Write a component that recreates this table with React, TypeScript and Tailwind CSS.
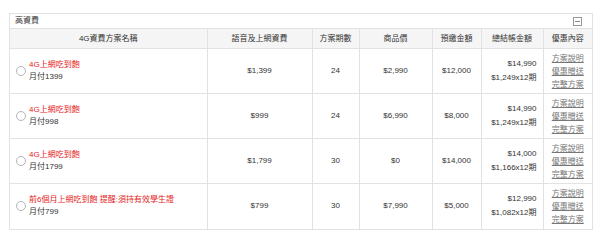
import React from 'react';

const plans = [
  { name: '4G上網吃到飽', monthly: '月付1399', fee: '$1,399', period: '24', price: '$2,990', prepay: '$12,000', total: '$14,990', install: '$1,249x12期' },
  { name: '4G上網吃到飽', monthly: '月付998', fee: '$999', period: '24', price: '$6,990', prepay: '$8,000', total: '$14,990', install: '$1,249x12期' },
  { name: '4G上網吃到飽', monthly: '月付1799', fee: '$1,799', period: '30', price: '$0', prepay: '$14,000', total: '$14,000', install: '$1,166x12期' },
  { name: '前6個月上網吃到飽 提醒:須持有效學生證', monthly: '月付799', fee: '$799', period: '30', price: '$7,990', prepay: '$5,000', total: '$12,990', install: '$1,082x12期' },
];

const headers = ['4G資費方案名稱', '語音及上網資費', '方案期數', '商品價', '預繳金額', '總結帳金額', '優惠內容'];
const widths = ['w-[197px]', 'w-[105px]', 'w-[47px]', 'w-[73px]', 'w-[49px]', 'w-[62px]', 'w-[49px]'];

export default function App() {
  return (
    <div className="w-[600px] h-[245px] bg-white pt-[13px] pl-[9px] text-[8px] leading-[12px] text-[#333] font-['Liberation_Sans','Noto_Sans_CJK_TC',sans-serif]">
      <div className="w-[584px] border border-[#e2e2e2]">
        {/* title band */}
        <div className="h-[14px] flex items-center justify-between pl-[5px] pr-[10px]">
          <span>高資費</span>
          <span className="w-[9px] h-[9px] border border-[#999] flex items-center justify-center">
            <span className="w-[5px] h-px bg-[#888]" />
          </span>
        </div>

        <table className="w-full table-fixed border-collapse">
          <colgroup>
            {widths.map((w, i) => (
              <col key={i} className={w} />
            ))}
          </colgroup>
          <thead>
            <tr className="h-[20px] bg-[#f5f5f5]">
              {headers.map((h, i) => (
                <th key={i} className={`font-normal text-center border-t border-[#e2e2e2] ${i > 0 ? 'border-l' : ''}`}>
                  {h}
                </th>
              ))}
            </tr>
          </thead>
          <tbody>
            {plans.map((p, i) => (
              <tr key={i} className="h-[45px]">
                <td className="border-t border-[#e2e2e2]">
                  <div className="flex items-center pl-[6px] gap-[3px]">
                    <span className="w-[10px] h-[10px] rounded-full border border-[#b5b5b5] bg-white shrink-0" />
                    <div className="leading-[12px]">
                      <div className="text-[#e5231b]">{p.name}</div>
                      <div>{p.monthly}</div>
                    </div>
                  </div>
                </td>
                <td className="border-t border-l border-[#e2e2e2] text-center">{p.fee}</td>
                <td className="border-t border-l border-[#e2e2e2] text-center">{p.period}</td>
                <td className="border-t border-l border-[#e2e2e2] text-center">{p.price}</td>
                <td className="border-t border-l border-[#e2e2e2] text-center">{p.prepay}</td>
                <td className="border-t border-l border-[#e2e2e2] text-right pr-[6px] leading-[14px]">
                  <div>{p.total}</div>
                  <div>{p.install}</div>
                </td>
                <td className="border-t border-l border-[#e2e2e2] text-center leading-[13px] text-[#777]">
                  <div><a className="underline">方案說明</a></div>
                  <div><a className="underline">優惠贈送</a></div>
                  <div><a className="underline">完整方案</a></div>
                </td>
              </tr>
            ))}
          </tbody>
        </table>
      </div>
    </div>
  );
}
